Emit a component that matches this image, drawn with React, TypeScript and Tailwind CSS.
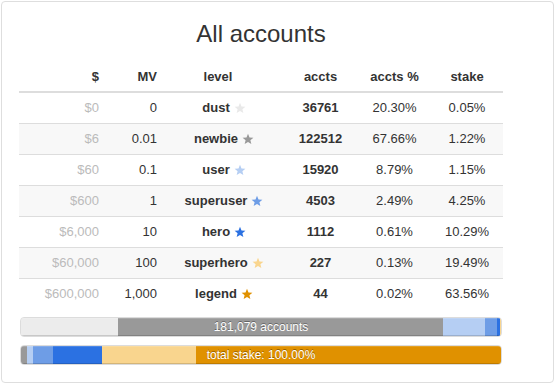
import React from "react";

type Row = {
  usd: string;
  mv: string;
  level: string;
  star: string;
  accts: string;
  pct: string;
  stake: string;
};

const rows: Row[] = [
  { usd: "$0", mv: "0", level: "dust", star: "#e9e9e9", accts: "36761", pct: "20.30%", stake: "0.05%" },
  { usd: "$6", mv: "0.01", level: "newbie", star: "#999999", accts: "122512", pct: "67.66%", stake: "1.22%" },
  { usd: "$60", mv: "0.1", level: "user", star: "#b5cef3", accts: "15920", pct: "8.79%", stake: "1.15%" },
  { usd: "$600", mv: "1", level: "superuser", star: "#6e9de6", accts: "4503", pct: "2.49%", stake: "4.25%" },
  { usd: "$6,000", mv: "10", level: "hero", star: "#2b71e2", accts: "1112", pct: "0.61%", stake: "10.29%" },
  { usd: "$60,000", mv: "100", level: "superhero", star: "#f9d58e", accts: "227", pct: "0.13%", stake: "19.49%" },
  { usd: "$600,000", mv: "1,000", level: "legend", star: "#e09100", accts: "44", pct: "0.02%", stake: "63.56%" },
];

const segColors = ["#ececec", "#999999", "#b5cef3", "#6e9de6", "#2b71e2", "#f9d58e", "#e09100"];
const acctPcts = [20.3, 67.66, 8.79, 2.49, 0.61, 0.13, 0.02];
const stakePcts = [0.05, 1.22, 1.15, 4.25, 10.29, 19.49, 63.56];

function Star({ color }: { color: string }) {
  return (
    <svg width="12" height="12" viewBox="0 0 24 24" className="shrink-0">
      <path
        d="M12 1.5l3 7.3 7.8.5-6 5.1 1.9 7.7L12 17.9l-6.7 4.2 1.9-7.7-6-5.1 7.8-.5z"
        fill={color}
      />
    </svg>
  );
}

function Bar({ pcts, label }: { pcts: number[]; label: string }) {
  return (
    <div className="relative mx-px h-[20px] rounded-[4px] overflow-hidden flex bg-[#f5f5f5] shadow-[inset_0_1px_2px_rgba(0,0,0,0.1)] border border-[#dcdcdc]">
      {pcts.map((p, i) => (
        <div
          key={i}
          className="h-full shadow-[inset_0_-1px_0_rgba(0,0,0,0.15),inset_0_1px_0_rgba(255,255,255,0.15)]"
          style={{ width: `${p}%`, backgroundColor: segColors[i] }}
        />
      ))}
      <div className="absolute inset-0 flex items-center justify-center text-white text-[12px] leading-[18px] [text-shadow:0_-1px_0_rgba(0,0,0,0.35)]">
        {label}
      </div>
    </div>
  );
}

export default function App() {
  return (
    <div className="w-[555px] h-[385px] bg-white p-px font-['Liberation_Sans',Arial,sans-serif] text-[#333]">
      <div className="w-[553px] h-[382px] border border-[#dedede] rounded-[4px] pl-[17px] flex flex-col">
        <div className="mt-[19px] text-center text-[24px] leading-[26px] w-[484px]">All accounts</div>
        <div className="w-[484px] text-[13px] leading-[18px]">
          <div className="flex h-[46px] items-end pb-[5px] border-b-2 border-[#dddddd] font-bold">
            <div className="w-[88px] px-[8px] text-right">$</div>
            <div className="w-[58px] px-[8px] text-right">MV</div>
            <div className="w-[118px] px-[8px] text-center pr-[20px]">level</div>
            <div className="w-[75px] px-[8px] text-center">accts</div>
            <div className="w-[73px] px-[8px] text-center">accts %</div>
            <div className="w-[72px] px-[8px] text-center">stake</div>
          </div>
          {rows.map((r, i) => (
            <div
              key={r.level}
              className={
                (i === 0 ? "h-[30px] " : "h-[31px] border-t border-[#dddddd] ") +
                (i % 2 === 1 ? "bg-[#f8f8f8] " : "bg-white ") +
                "flex items-center"
              }
            >
              <div className="w-[88px] px-[8px] text-right text-[#bbbbbb]">{r.usd}</div>
              <div className="w-[58px] px-[8px] text-right">{r.mv}</div>
              <div className="w-[118px] px-[4px] flex items-center justify-center gap-[4px] font-bold">
                <span>{r.level}</span>
                <Star color={r.star} />
              </div>
              <div className="w-[75px] px-[8px] text-center font-bold">{r.accts}</div>
              <div className="w-[73px] px-[8px] text-center">{r.pct}</div>
              <div className="w-[72px] px-[8px] text-center">{r.stake}</div>
            </div>
          ))}
          <div className="mt-[8px]">
            <Bar pcts={acctPcts} label="181,079 accounts" />
          </div>
          <div className="mt-[8px]">
            <Bar pcts={stakePcts} label="total stake: 100.00%" />
          </div>
        </div>
      </div>
    </div>
  );
}
